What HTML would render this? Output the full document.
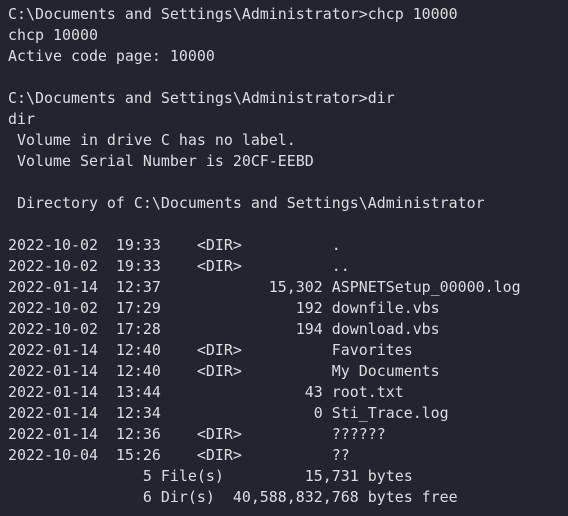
<!DOCTYPE html><html><head><style>
html,body{margin:0;background:#22252e;width:568px;height:516px;overflow:hidden}
pre{margin:0;padding:4px 0 0 8px;font-family:"DejaVu Sans Mono","Liberation Mono",monospace;font-size:14.95px;line-height:21px;color:#dcdde0;white-space:pre}
</style></head><body><pre>C:\Documents and Settings\Administrator&gt;chcp 10000
chcp 10000
Active code page: 10000

C:\Documents and Settings\Administrator&gt;dir
dir
 Volume in drive C has no label.
 Volume Serial Number is 20CF-EEBD

 Directory of C:\Documents and Settings\Administrator

2022-10-02  19:33    &lt;DIR&gt;          .
2022-10-02  19:33    &lt;DIR&gt;          ..
2022-01-14  12:37            15,302 ASPNETSetup_00000.log
2022-10-02  17:29               192 downfile.vbs
2022-10-02  17:28               194 download.vbs
2022-01-14  12:40    &lt;DIR&gt;          Favorites
2022-01-14  12:40    &lt;DIR&gt;          My Documents
2022-01-14  13:44                43 root.txt
2022-01-14  12:34                 0 Sti_Trace.log
2022-01-14  12:36    &lt;DIR&gt;          ??????
2022-10-04  15:26    &lt;DIR&gt;          ??
               5 File(s)         15,731 bytes
               6 Dir(s)  40,588,832,768 bytes free</pre></body></html>
